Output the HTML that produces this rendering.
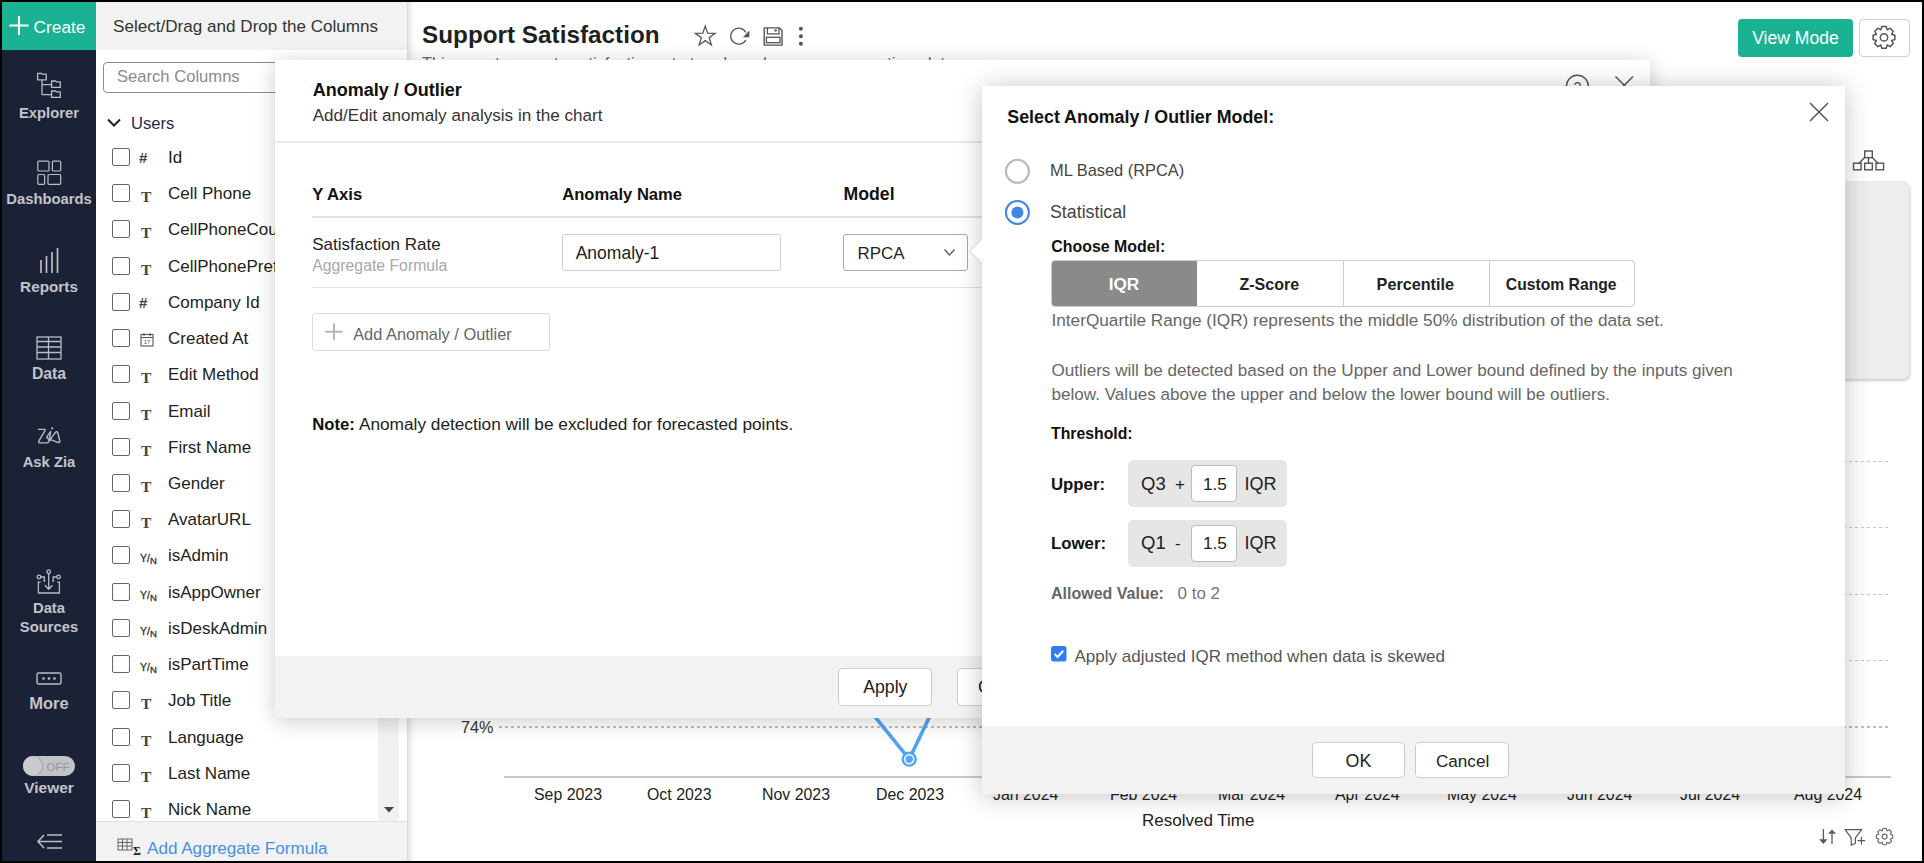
<!DOCTYPE html>
<html><head><meta charset="utf-8"><title>Support Satisfaction</title>
<style>
html,body{margin:0;padding:0;width:1924px;height:863px;overflow:hidden;background:#000}
#app{position:absolute;left:2px;top:2px;width:1920px;height:859px;background:#fff;overflow:hidden}
#c{position:absolute;left:-2px;top:-2px;width:1924px;height:863px}
.t{position:absolute;white-space:nowrap;line-height:1;font-family:"Liberation Sans",sans-serif}
.r{position:absolute;display:block}
</style></head><body><div id="app"><div id="c">
<div class="t" style="left:422px;top:23px;font-size:24.3px;font-weight:700;color:#1f1f1f;">Support Satisfaction</div>
<div class="t" style="left:422px;top:55px;font-size:16.3px;font-weight:400;color:#666;">This report presents satisfaction rate trends and responses over time data</div>
<svg class="r" style="left:690px;top:22px;" width="120" height="30" viewBox="0 0 120 30"><path d="M15.25 4.10 L17.66 11.18 L25.14 11.29 L19.15 15.77 L21.36 22.91 L15.25 18.60 L9.14 22.91 L11.35 15.77 L5.36 11.29 L12.84 11.18Z" fill="none" stroke="#555" stroke-width="1.3" stroke-linejoin="miter"/><path d="M55.76 17.96A8.0 8.0 0 1 1 55.83 10.57" fill="none" stroke="#555" stroke-width="1.3"/><path d="M59.4 8.6V15.2H52.9z" fill="#555"/><path d="M74.2 5.9H89.4L92 8.5V23.1H74.2z" fill="none" stroke="#555" stroke-width="1.4" stroke-linejoin="round"/><path d="M77.4 5.9V11.9H89V5.9" fill="none" stroke="#555" stroke-width="1.3"/><rect x="84.4" y="7.4" width="2.4" height="2.2" fill="#666"/><rect x="76.4" y="15.3" width="13.6" height="5.4" fill="none" stroke="#555" stroke-width="1.3"/><circle cx="110.9" cy="6.8" r="2" fill="#555"/><circle cx="110.9" cy="14.2" r="2" fill="#555"/><circle cx="110.9" cy="21.7" r="2" fill="#555"/></svg>
<div class="r" style="left:1738px;top:19px;width:115px;height:38px;background:#1bb193;border-radius:4px"></div>
<div class="t" style="left:1495.5px;width:600px;text-align:center;top:30px;font-size:17.6px;font-weight:400;color:#fff;">View Mode</div>
<div class="r" style="left:1859px;top:19px;width:51px;height:38px;background:#fff;border:1px solid #c9d0e6;border-radius:4px;box-sizing:border-box"></div>
<svg class="r" style="left:1870px;top:23px;" width="28" height="28" viewBox="0 0 28 28"><path d="M10.79 6.86 L11.81 3.52 L16.19 3.52 L17.21 6.86 L17.06 6.79 L20.15 5.16 L23.24 8.25 L21.61 11.34 L21.54 11.19 L24.88 12.21 L24.88 16.59 L21.54 17.61 L21.61 17.46 L23.24 20.55 L20.15 23.64 L17.06 22.01 L17.21 21.94 L16.19 25.28 L11.81 25.28 L10.79 21.94 L10.94 22.01 L7.85 23.64 L4.76 20.55 L6.39 17.46 L6.46 17.61 L3.12 16.59 L3.12 12.21 L6.46 11.19 L6.39 11.34 L4.76 8.25 L7.85 5.16 L10.94 6.79Z" fill="none" stroke="#555" stroke-width="1.5" stroke-linejoin="round"/><circle cx="14" cy="14.4" r="3.7" fill="none" stroke="#555" stroke-width="1.5"/></svg>
<svg class="r" style="left:1852px;top:150px;" width="34" height="22" viewBox="0 0 34 22"><g fill="none" stroke="#555" stroke-width="1.4"><rect x="12.7" y="1" width="7.6" height="6.6"/><rect x="1.5" y="13.2" width="7.6" height="6.6"/><rect x="12.7" y="13.2" width="7.6" height="6.6"/><rect x="24" y="13.2" width="7.6" height="6.6"/><path d="M16.5 7.6v5.6M12.7 7.6L7 13.2M20.3 7.6L26 13.2"/></g></svg>
<div class="r" style="left:1700px;top:181px;width:209px;height:198px;background:#ededed;border-radius:6px;box-shadow:1px 2px 3px rgba(0,0,0,.2)"></div>
<div class="r" style="left:499px;top:461px;width:1389px;height:1px;background-image:linear-gradient(90deg,#c4c4c4 50%,transparent 50%);background-size:6px 1px"></div>
<div class="r" style="left:499px;top:527px;width:1389px;height:1px;background-image:linear-gradient(90deg,#c4c4c4 50%,transparent 50%);background-size:6px 1px"></div>
<div class="r" style="left:499px;top:594px;width:1389px;height:1px;background-image:linear-gradient(90deg,#c4c4c4 50%,transparent 50%);background-size:6px 1px"></div>
<div class="r" style="left:499px;top:660px;width:1389px;height:1px;background-image:linear-gradient(90deg,#c4c4c4 50%,transparent 50%);background-size:6px 1px"></div>
<div class="r" style="left:499px;top:726px;width:1389px;height:2px;background-image:linear-gradient(90deg,#bdbdbd 50%,transparent 50%);background-size:6px 2px"></div>
<div class="r" style="left:504px;top:776px;width:1387px;height:2px;background:#c8c8c8"></div>
<div class="t" style="left:461px;top:719px;font-size:16.2px;font-weight:400;color:#333;">74%</div>
<div class="t" style="left:534px;top:787px;font-size:15.9px;font-weight:400;color:#222;">Sep 2023</div>
<div class="t" style="left:647px;top:787px;font-size:15.9px;font-weight:400;color:#222;">Oct 2023</div>
<div class="t" style="left:762px;top:787px;font-size:15.9px;font-weight:400;color:#222;">Nov 2023</div>
<div class="t" style="left:876px;top:787px;font-size:15.9px;font-weight:400;color:#222;">Dec 2023</div>
<div class="t" style="left:993px;top:787px;font-size:15.9px;font-weight:400;color:#222;">Jan 2024</div>
<div class="t" style="left:1110px;top:787px;font-size:15.9px;font-weight:400;color:#222;">Feb 2024</div>
<div class="t" style="left:1218px;top:787px;font-size:15.9px;font-weight:400;color:#222;">Mar 2024</div>
<div class="t" style="left:1335px;top:787px;font-size:15.9px;font-weight:400;color:#222;">Apr 2024</div>
<div class="t" style="left:1447px;top:787px;font-size:15.9px;font-weight:400;color:#222;">May 2024</div>
<div class="t" style="left:1567px;top:787px;font-size:15.9px;font-weight:400;color:#222;">Jun 2024</div>
<div class="t" style="left:1680px;top:787px;font-size:15.9px;font-weight:400;color:#222;">Jul 2024</div>
<div class="t" style="left:1794px;top:787px;font-size:15.9px;font-weight:400;color:#222;">Aug 2024</div>
<div class="t" style="left:1142px;top:812px;font-size:17px;font-weight:400;color:#222;">Resolved Time</div>
<svg class="r" style="left:850px;top:690px;" width="100" height="80" viewBox="0 0 100 80"><polyline points="3.4,0 59.2,69.2 92.3,0" fill="none" stroke="#52a2f0" stroke-width="3.6"/><circle cx="59.2" cy="69.2" r="7.6" fill="#52a2f0"/><circle cx="59.2" cy="69.2" r="5.2" fill="#fff"/><circle cx="59.2" cy="69.2" r="3.7" fill="#58a6f3"/></svg>
<svg class="r" style="left:1816px;top:826px;" width="80" height="24" viewBox="0 0 80 24"><g fill="none" stroke="#5a5a5a" stroke-width="1.3"><path d="M7.4 3.1V14M16 17.9V7.8"/><path d="M29.1 3.6H45.7L39.4 11.8V17.2L35.2 19.3V11.8Z" stroke-width="1.2" stroke-linejoin="round"/><path d="M45.4 10.7v7.9M41.5 14.6h7.7" stroke-width="1.2"/></g><path d="M3.1 13.2H11.5L7.4 17.9ZM12 7.8H20L16 3.6Z" fill="#5a5a5a"/><path d="M66.26 4.86 L67.01 2.45 L70.19 2.45 L70.94 4.86 L71.00 4.89 L73.24 3.72 L75.48 5.96 L74.31 8.20 L74.34 8.26 L76.75 9.01 L76.75 12.19 L74.34 12.94 L74.31 13.00 L75.48 15.24 L73.24 17.48 L71.00 16.31 L70.94 16.34 L70.19 18.75 L67.01 18.75 L66.26 16.34 L66.20 16.31 L63.96 17.48 L61.72 15.24 L62.89 13.00 L62.86 12.94 L60.45 12.19 L60.45 9.01 L62.86 8.26 L62.89 8.20 L61.72 5.96 L63.96 3.72 L66.20 4.89Z" fill="none" stroke="#666" stroke-width="1.1" stroke-linejoin="round"/><circle cx="68.6" cy="10.6" r="2.5" fill="none" stroke="#666" stroke-width="1.1"/></svg>
<div class="r" style="left:96px;top:2px;width:311px;height:48px;background:#f2f2f2"></div>
<div class="t" style="left:113px;top:18px;font-size:17.1px;font-weight:400;color:#333;">Select/Drag and Drop the Columns</div>
<div class="r" style="left:407px;top:2px;width:10px;height:859px;background:linear-gradient(90deg,#d9d9d9,#efefef 30%,#fafafa 60%,#fff)"></div>
<div class="r" style="left:103px;top:62px;width:297px;height:31px;border:1px solid #8c8c8c;border-radius:4px;box-sizing:border-box;background:#fff"></div>
<div class="t" style="left:117px;top:69px;font-size:16.6px;font-weight:400;color:#8a8a8a;">Search Columns</div>
<svg class="r" style="left:106px;top:117px;" width="16" height="12" viewBox="0 0 16 12"><path d="M2 2.5l6 6 6-6" fill="none" stroke="#222" stroke-width="2"/></svg>
<div class="t" style="left:131px;top:116px;font-size:16.6px;font-weight:400;color:#1f2a44;">Users</div>
<div class="r" style="left:112px;top:148px;width:18px;height:18px;border:1.2px solid #666;border-radius:2px;box-sizing:border-box;background:#fff"></div>
<div class="t" style="left:139px;top:150px;font-size:15px;font-weight:700;color:#444;">#</div>
<div class="t" style="left:168px;top:149px;font-size:17px;font-weight:400;color:#222;">Id</div>
<div class="r" style="left:112px;top:184px;width:18px;height:18px;border:1.2px solid #666;border-radius:2px;box-sizing:border-box;background:#fff"></div>
<div class="t" style="left:141px;top:189px;font-size:15.5px;font-weight:700;color:#444;font-family:'Liberation Serif',serif">T</div>
<div class="t" style="left:168px;top:185px;font-size:17px;font-weight:400;color:#222;">Cell Phone</div>
<div class="r" style="left:112px;top:220px;width:18px;height:18px;border:1.2px solid #666;border-radius:2px;box-sizing:border-box;background:#fff"></div>
<div class="t" style="left:141px;top:225px;font-size:15.5px;font-weight:700;color:#444;font-family:'Liberation Serif',serif">T</div>
<div class="t" style="left:168px;top:221px;font-size:17px;font-weight:400;color:#222;">CellPhoneCountryCode</div>
<div class="r" style="left:112px;top:257px;width:18px;height:18px;border:1.2px solid #666;border-radius:2px;box-sizing:border-box;background:#fff"></div>
<div class="t" style="left:141px;top:262px;font-size:15.5px;font-weight:700;color:#444;font-family:'Liberation Serif',serif">T</div>
<div class="t" style="left:168px;top:258px;font-size:17px;font-weight:400;color:#222;">CellPhonePrefix</div>
<div class="r" style="left:112px;top:293px;width:18px;height:18px;border:1.2px solid #666;border-radius:2px;box-sizing:border-box;background:#fff"></div>
<div class="t" style="left:139px;top:295px;font-size:15px;font-weight:700;color:#444;">#</div>
<div class="t" style="left:168px;top:294px;font-size:17px;font-weight:400;color:#222;">Company Id</div>
<div class="r" style="left:112px;top:329px;width:18px;height:18px;border:1.2px solid #666;border-radius:2px;box-sizing:border-box;background:#fff"></div>
<svg class="r" style="left:140px;top:332px;" width="14" height="15" viewBox="0 0 14 15"><rect x="1" y="2.5" width="12" height="11.5" fill="none" stroke="#555" stroke-width="1.1"/><path d="M1 5.5h12M4 1v3M10 1v3" stroke="#555" stroke-width="1.1"/><text x="7" y="12.3" font-size="6" text-anchor="middle" fill="#555" font-family="Liberation Sans">17</text></svg>
<div class="t" style="left:168px;top:330px;font-size:17px;font-weight:400;color:#222;">Created At</div>
<div class="r" style="left:112px;top:365px;width:18px;height:18px;border:1.2px solid #666;border-radius:2px;box-sizing:border-box;background:#fff"></div>
<div class="t" style="left:141px;top:370px;font-size:15.5px;font-weight:700;color:#444;font-family:'Liberation Serif',serif">T</div>
<div class="t" style="left:168px;top:366px;font-size:17px;font-weight:400;color:#222;">Edit Method</div>
<div class="r" style="left:112px;top:402px;width:18px;height:18px;border:1.2px solid #666;border-radius:2px;box-sizing:border-box;background:#fff"></div>
<div class="t" style="left:141px;top:407px;font-size:15.5px;font-weight:700;color:#444;font-family:'Liberation Serif',serif">T</div>
<div class="t" style="left:168px;top:403px;font-size:17px;font-weight:400;color:#222;">Email</div>
<div class="r" style="left:112px;top:438px;width:18px;height:18px;border:1.2px solid #666;border-radius:2px;box-sizing:border-box;background:#fff"></div>
<div class="t" style="left:141px;top:443px;font-size:15.5px;font-weight:700;color:#444;font-family:'Liberation Serif',serif">T</div>
<div class="t" style="left:168px;top:439px;font-size:17px;font-weight:400;color:#222;">First Name</div>
<div class="r" style="left:112px;top:474px;width:18px;height:18px;border:1.2px solid #666;border-radius:2px;box-sizing:border-box;background:#fff"></div>
<div class="t" style="left:141px;top:479px;font-size:15.5px;font-weight:700;color:#444;font-family:'Liberation Serif',serif">T</div>
<div class="t" style="left:168px;top:475px;font-size:17px;font-weight:400;color:#222;">Gender</div>
<div class="r" style="left:112px;top:510px;width:18px;height:18px;border:1.2px solid #666;border-radius:2px;box-sizing:border-box;background:#fff"></div>
<div class="t" style="left:141px;top:515px;font-size:15.5px;font-weight:700;color:#444;font-family:'Liberation Serif',serif">T</div>
<div class="t" style="left:168px;top:511px;font-size:17px;font-weight:400;color:#222;">AvatarURL</div>
<div class="r" style="left:112px;top:546px;width:18px;height:18px;border:1.2px solid #666;border-radius:2px;box-sizing:border-box;background:#fff"></div>
<div class="t" style="left:140px;top:553px;font-size:10.5px;font-weight:400;color:#333;-webkit-text-stroke:0.3px #333">Y/<span style="font-size:9.5px;position:relative;top:2px">N</span></div>
<div class="t" style="left:168px;top:547px;font-size:17px;font-weight:400;color:#222;">isAdmin</div>
<div class="r" style="left:112px;top:583px;width:18px;height:18px;border:1.2px solid #666;border-radius:2px;box-sizing:border-box;background:#fff"></div>
<div class="t" style="left:140px;top:590px;font-size:10.5px;font-weight:400;color:#333;-webkit-text-stroke:0.3px #333">Y/<span style="font-size:9.5px;position:relative;top:2px">N</span></div>
<div class="t" style="left:168px;top:584px;font-size:17px;font-weight:400;color:#222;">isAppOwner</div>
<div class="r" style="left:112px;top:619px;width:18px;height:18px;border:1.2px solid #666;border-radius:2px;box-sizing:border-box;background:#fff"></div>
<div class="t" style="left:140px;top:626px;font-size:10.5px;font-weight:400;color:#333;-webkit-text-stroke:0.3px #333">Y/<span style="font-size:9.5px;position:relative;top:2px">N</span></div>
<div class="t" style="left:168px;top:620px;font-size:17px;font-weight:400;color:#222;">isDeskAdmin</div>
<div class="r" style="left:112px;top:655px;width:18px;height:18px;border:1.2px solid #666;border-radius:2px;box-sizing:border-box;background:#fff"></div>
<div class="t" style="left:140px;top:662px;font-size:10.5px;font-weight:400;color:#333;-webkit-text-stroke:0.3px #333">Y/<span style="font-size:9.5px;position:relative;top:2px">N</span></div>
<div class="t" style="left:168px;top:656px;font-size:17px;font-weight:400;color:#222;">isPartTime</div>
<div class="r" style="left:112px;top:691px;width:18px;height:18px;border:1.2px solid #666;border-radius:2px;box-sizing:border-box;background:#fff"></div>
<div class="t" style="left:141px;top:696px;font-size:15.5px;font-weight:700;color:#444;font-family:'Liberation Serif',serif">T</div>
<div class="t" style="left:168px;top:692px;font-size:17px;font-weight:400;color:#222;">Job Title</div>
<div class="r" style="left:112px;top:728px;width:18px;height:18px;border:1.2px solid #666;border-radius:2px;box-sizing:border-box;background:#fff"></div>
<div class="t" style="left:141px;top:733px;font-size:15.5px;font-weight:700;color:#444;font-family:'Liberation Serif',serif">T</div>
<div class="t" style="left:168px;top:729px;font-size:17px;font-weight:400;color:#222;">Language</div>
<div class="r" style="left:112px;top:764px;width:18px;height:18px;border:1.2px solid #666;border-radius:2px;box-sizing:border-box;background:#fff"></div>
<div class="t" style="left:141px;top:769px;font-size:15.5px;font-weight:700;color:#444;font-family:'Liberation Serif',serif">T</div>
<div class="t" style="left:168px;top:765px;font-size:17px;font-weight:400;color:#222;">Last Name</div>
<div class="r" style="left:112px;top:800px;width:18px;height:18px;border:1.2px solid #666;border-radius:2px;box-sizing:border-box;background:#fff"></div>
<div class="t" style="left:141px;top:805px;font-size:15.5px;font-weight:700;color:#444;font-family:'Liberation Serif',serif">T</div>
<div class="t" style="left:168px;top:801px;font-size:17px;font-weight:400;color:#222;">Nick Name</div>
<div class="r" style="left:378px;top:93px;width:21px;height:728px;background:#f1f1f1"></div>
<svg class="r" style="left:384px;top:807px;" width="11" height="6" viewBox="0 0 11 6"><path d="M0 0h10L5 5.5z" fill="#444"/></svg>
<div class="r" style="left:96px;top:821px;width:311px;height:40px;background:#f2f2f2;border-top:1px solid #e3e3e3;box-sizing:border-box"></div>
<svg class="r" style="left:117px;top:838px;" width="24" height="18" viewBox="0 0 24 18"><g fill="none" stroke="#666" stroke-width="1"><rect x="1" y="1" width="14" height="11"/><path d="M1 4.5h14M1 8h14M5.5 1v11M10 1v11"/></g><text x="16" y="17" font-size="12" font-weight="bold" fill="#222" font-family="Liberation Serif">&#931;</text></svg>
<div class="t" style="left:147px;top:840px;font-size:17.1px;font-weight:400;color:#4a8ee6;">Add Aggregate Formula</div>
<div class="r" style="left:2px;top:2px;width:94px;height:859px;background:#1c2236"></div>
<div class="r" style="left:2px;top:2px;width:94px;height:48px;background:#1bb193"></div>
<svg class="r" style="left:9px;top:15px;" width="20" height="20" viewBox="0 0 20 20"><path d="M10 1v19M0.5 10.5h19" stroke="#fff" stroke-width="2"/></svg>
<div class="t" style="left:33.6px;top:19px;font-size:17.3px;font-weight:400;color:#fff;">Create</div>
<svg class="r" style="left:36px;top:71px;" width="26" height="28" viewBox="0 0 26 28"><g fill="none" stroke="#b9bcc4" stroke-width="1.3" stroke-linejoin="round"><path d="M1.6 8.9V2.4h3.8l.9.8h4V8.9z"/><path d="M15.6 16.4V10h3.8l.9.8h4v5.6z"/><path d="M15.6 26.4V20h3.8l.9.8h4v5.6z"/><path d="M6 8.9V23.6h9.6M6 13.6h9.6"/></g></svg>
<div class="t" style="left:-251px;width:600px;text-align:center;top:106px;font-size:14.8px;font-weight:700;color:#c2c4ca;">Explorer</div>
<svg class="r" style="left:36px;top:159px;" width="26" height="27" viewBox="0 0 26 27"><g fill="none" stroke="#b9bcc4" stroke-width="1.2"><rect x="1.8" y="2.1" width="11.2" height="9.9" rx="1"/><rect x="16.4" y="2.1" width="8.3" height="9.9" rx="1"/><rect x="1.8" y="15.5" width="6.8" height="9.8" rx="1"/><rect x="12" y="15.5" width="12.7" height="9.8" rx="1"/></g></svg>
<div class="t" style="left:-251px;width:600px;text-align:center;top:192px;font-size:14.8px;font-weight:700;color:#c2c4ca;">Dashboards</div>
<svg class="r" style="left:38px;top:247px;" width="22" height="28" viewBox="0 0 22 28"><g stroke="#b9bcc4" stroke-width="1.7"><path d="M3 26V13M8.5 26V9M14 26V5M19.5 26V1"/></g></svg>
<div class="t" style="left:-251px;width:600px;text-align:center;top:279px;font-size:15.3px;font-weight:700;color:#c2c4ca;">Reports</div>
<svg class="r" style="left:36px;top:336px;" width="26" height="24" viewBox="0 0 26 24"><g fill="none" stroke="#b9bcc4" stroke-width="1.3"><rect x="1" y="1" width="24" height="22"/><path d="M1 5.5h24M1 11h24M1 16.5h24M12.5 1v22"/></g></svg>
<div class="t" style="left:-251px;width:600px;text-align:center;top:366px;font-size:15.8px;font-weight:700;color:#c2c4ca;">Data</div>
<svg class="r" style="left:36px;top:426px;" width="28" height="19" viewBox="0 0 28 19"><g fill="none" stroke="#b9bcc4" stroke-width="1.4" stroke-linejoin="round" stroke-linecap="round"><path d="M2.4 3.4H8.3Q9.6 3.4 9 4.6L2.9 14.8Q2.1 16.9 4.2 16.9H10.4Q12 16.9 13 15.3L14.6 5.6"/><path d="M14.4 5.8L11 10.6Q10.4 12 12 12.6L21.8 16.3Q24.3 17 23.8 14.8L21.8 7Q21 4.6 19.2 6.6L13.3 14.6"/></g><circle cx="16.2" cy="2.3" r="1.1" fill="#b9bcc4"/></svg>
<div class="t" style="left:-251px;width:600px;text-align:center;top:455px;font-size:14.8px;font-weight:700;color:#c2c4ca;">Ask Zia</div>
<svg class="r" style="left:35px;top:568px;" width="28" height="27" viewBox="0 0 28 27"><g fill="none" stroke="#b9bcc4" stroke-width="1.3"><path d="M5.6 14.2H3.4V25H24.4V14.2H22.2"/><path d="M13.7 5.5V21.2M9.9 17.2l3.8 4 3.8-4"/><circle cx="13.7" cy="3.7" r="1.8"/><circle cx="4" cy="9" r="1.8"/><circle cx="23.5" cy="9" r="1.8"/><path d="M5.8 9H9.3V12.8M21.7 9H18.2V12.8"/></g><path d="M8 12.6L9.3 14.6 10.6 12.6zM16.9 12.6L18.2 14.6 19.5 12.6z" fill="#b9bcc4"/></svg>
<div class="t" style="left:-251px;width:600px;text-align:center;top:601px;font-size:14.8px;font-weight:700;color:#c2c4ca;">Data</div>
<div class="t" style="left:-251px;width:600px;text-align:center;top:620px;font-size:14.8px;font-weight:700;color:#c2c4ca;">Sources</div>
<svg class="r" style="left:36px;top:672px;" width="26" height="13" viewBox="0 0 26 13"><rect x="1" y="1" width="24" height="11" rx="1.5" fill="none" stroke="#b9bcc4" stroke-width="1.4"/><circle cx="7.5" cy="6.5" r="1.3" fill="#b9bcc4"/><circle cx="13" cy="6.5" r="1.3" fill="#b9bcc4"/><circle cx="18.5" cy="6.5" r="1.3" fill="#b9bcc4"/></svg>
<div class="t" style="left:-251px;width:600px;text-align:center;top:695px;font-size:16.5px;font-weight:700;color:#c2c4ca;">More</div>
<div class="r" style="left:23px;top:756px;width:52px;height:20px;background:#c2c3c7;border-radius:10px"></div>
<div class="r" style="left:23px;top:756px;width:19px;height:20px;background:#cacbcf;border-radius:50%;box-shadow:1px 0 1px rgba(0,0,0,.18)"></div>
<div class="t" style="left:-242px;width:600px;text-align:center;top:762px;font-size:11.5px;font-weight:400;color:#96979c;">OFF</div>
<div class="t" style="left:-251px;width:600px;text-align:center;top:780px;font-size:15.5px;font-weight:700;color:#c2c4ca;">Viewer</div>
<svg class="r" style="left:36px;top:832px;" width="28" height="19" viewBox="0 0 28 19"><g fill="none" stroke="#b9bcc4" stroke-width="1.6"><path d="M8 3L2 9.5 8 16M2 9.5h24M11 3h15M11 16h15"/></g></svg>
<div class="r" style="left:275px;top:60px;width:1375px;height:658px;background:#fff;box-shadow:0 3px 20px rgba(0,0,0,.2)">
</div>
<div class="t" style="left:312.7px;top:81px;font-size:18px;font-weight:700;color:#111;">Anomaly / Outlier</div>
<div class="t" style="left:312.7px;top:107px;font-size:17.1px;font-weight:400;color:#333;">Add/Edit anomaly analysis in the chart</div>
<div class="r" style="left:275px;top:141px;width:1375px;height:2px;background:#e8e8e8"></div>
<svg class="r" style="left:1562px;top:72px;" width="76" height="30" viewBox="0 0 76 30"><circle cx="15.4" cy="14.2" r="11" fill="none" stroke="#555" stroke-width="1.4"/><text x="15.4" y="19.5" font-size="14" text-anchor="middle" fill="#555" font-family="Liberation Sans">?</text><path d="M53.5 4.5l17.5 17.5M71 4.5L53.5 22" stroke="#555" stroke-width="1.5"/></svg>
<div class="t" style="left:312.2px;top:187px;font-size:16.7px;font-weight:700;color:#111;">Y Axis</div>
<div class="t" style="left:562.2px;top:187px;font-size:16.6px;font-weight:700;color:#111;">Anomaly Name</div>
<div class="t" style="left:843.5px;top:186px;font-size:17.7px;font-weight:700;color:#111;">Model</div>
<div class="r" style="left:312px;top:216px;width:1338px;height:2px;background:#e2e2e2"></div>
<div class="t" style="left:312.2px;top:236px;font-size:17px;font-weight:400;color:#222;">Satisfaction Rate</div>
<div class="t" style="left:312.2px;top:258px;font-size:15.8px;font-weight:400;color:#a8a8a8;">Aggregate Formula</div>
<div class="r" style="left:312px;top:287px;width:1338px;height:1px;background:#e2e2e2"></div>
<div class="r" style="left:562px;top:234px;width:219px;height:37px;border:1px solid #cfcfcf;border-radius:3px;box-sizing:border-box"></div>
<div class="t" style="left:575.7px;top:245px;font-size:17.5px;font-weight:400;color:#222;">Anomaly-1</div>
<div class="r" style="left:843px;top:234px;width:125px;height:37px;border:1px solid #a9a9a9;border-radius:3px;box-sizing:border-box"></div>
<div class="t" style="left:857.6px;top:246px;font-size:16.9px;font-weight:400;color:#222;">RPCA</div>
<svg class="r" style="left:943px;top:248px;" width="14" height="10" viewBox="0 0 14 10"><path d="M1.5 1.5l5 5.5 5-5.5" fill="none" stroke="#666" stroke-width="1.5"/></svg>
<div class="r" style="left:312px;top:313px;width:238px;height:38px;border:1px solid #dcdcdc;border-radius:3px;box-sizing:border-box"></div>
<svg class="r" style="left:325px;top:323px;" width="18" height="18" viewBox="0 0 18 18"><path d="M9 0.5v16.5M0.5 8.8h17" stroke="#b3b6c2" stroke-width="2"/></svg>
<div class="t" style="left:353.2px;top:326px;font-size:16.4px;font-weight:400;color:#666;">Add Anomaly / Outlier</div>
<div class="t" style="left:312.2px;top:417px;font-size:16.7px;font-weight:700;color:#111;">Note:</div>
<div class="t" style="left:358.9px;top:416px;font-size:17.25px;font-weight:400;color:#222;">Anomaly detection will be excluded for forecasted points.</div>
<div class="r" style="left:275px;top:656px;width:1375px;height:62px;background:#f2f2f2"></div>
<div class="r" style="left:838px;top:668px;width:94px;height:38px;background:#fff;border:1px solid #cccccc;border-radius:4px;box-sizing:border-box"></div>
<div class="t" style="left:863.2px;top:679px;font-size:17.7px;font-weight:400;color:#222;">Apply</div>
<div class="r" style="left:957px;top:668px;width:94px;height:38px;background:#fff;border:1px solid #cccccc;border-radius:4px;box-sizing:border-box"></div>
<div class="t" style="left:978px;top:679px;font-size:17.7px;font-weight:400;color:#222;">Cancel</div>
<div class="r" style="left:982px;top:86px;width:863px;height:708px;background:#fff;box-shadow:0 2px 24px rgba(0,0,0,.24)"></div>
<svg class="r" style="left:962px;top:230px;" width="22" height="42" viewBox="0 0 22 42"><path d="M21 8L7.3 21 21 34z" fill="#fff"/><path d="M20.5 8.5L7.5 21l13 12.5" fill="none" stroke="#cfcfcf" stroke-width="1"/></svg>
<div class="t" style="left:1007.3px;top:109px;font-size:17.84px;font-weight:700;color:#111;">Select Anomaly / Outlier Model:</div>
<svg class="r" style="left:1808px;top:101px;" width="22" height="22" viewBox="0 0 22 22"><path d="M2 2l18 18M20 2L2 20" stroke="#555" stroke-width="1.5"/></svg>
<svg class="r" style="left:1004px;top:158px;" width="27" height="27" viewBox="0 0 27 27"><circle cx="13.4" cy="13.3" r="11.5" fill="#fff" stroke="#b8b8b8" stroke-width="2"/></svg>
<div class="t" style="left:1050px;top:162px;font-size:16.4px;font-weight:400;color:#444;">ML Based (RPCA)</div>
<svg class="r" style="left:1004px;top:199px;" width="27" height="27" viewBox="0 0 27 27"><circle cx="13.4" cy="13.4" r="11.5" fill="#fff" stroke="#3f86e8" stroke-width="2"/><circle cx="13.4" cy="13.4" r="6" fill="#3f86e8"/></svg>
<div class="t" style="left:1050px;top:204px;font-size:17.8px;font-weight:400;color:#444;">Statistical</div>
<div class="t" style="left:1051.3px;top:239px;font-size:15.9px;font-weight:700;color:#111;">Choose Model:</div>
<div class="r" style="left:1051px;top:260px;width:584px;height:47px;border:1px solid #cdcdcd;border-radius:4px;box-sizing:border-box;overflow:hidden"><div style="position:absolute;left:0;top:0;width:145px;height:45px;background:#8a8a8a"></div><div style="position:absolute;left:291px;top:0;width:1px;height:45px;background:#cdcdcd"></div><div style="position:absolute;left:437px;top:0;width:1px;height:45px;background:#cdcdcd"></div></div>
<div class="t" style="left:824px;width:600px;text-align:center;top:276px;font-size:17.2px;font-weight:700;color:#fff;">IQR</div>
<div class="t" style="left:969.3px;width:600px;text-align:center;top:277px;font-size:16px;font-weight:700;color:#222;">Z-Score</div>
<div class="t" style="left:1115.3px;width:600px;text-align:center;top:276px;font-size:16.2px;font-weight:700;color:#222;">Percentile</div>
<div class="t" style="left:1261.2px;width:600px;text-align:center;top:277px;font-size:15.7px;font-weight:700;color:#222;">Custom Range</div>
<div class="t" style="left:1051.5px;top:312px;font-size:17.2px;font-weight:400;color:#666;">InterQuartile Range (IQR) represents the middle 50% distribution of the data set.</div>
<div class="t" style="left:1051.5px;top:362px;font-size:17.1px;font-weight:400;color:#666;">Outliers will be detected based on the Upper and Lower bound defined by the inputs given</div>
<div class="t" style="left:1051.5px;top:386px;font-size:17.1px;font-weight:400;color:#666;">below. Values above the upper and below the lower bound will be outliers.</div>
<div class="t" style="left:1051px;top:426px;font-size:15.8px;font-weight:700;color:#111;">Threshold:</div>
<div class="t" style="left:1051px;top:477px;font-size:16.8px;font-weight:700;color:#111;">Upper:</div>
<div class="r" style="left:1128px;top:460px;width:159px;height:47px;background:#e6e6e6;border-radius:5px"></div>
<div class="t" style="left:1141px;top:475px;font-size:18.5px;font-weight:400;color:#222;">Q3</div>
<div class="t" style="left:1175px;top:476px;font-size:17px;font-weight:400;color:#222;">+</div>
<div class="r" style="left:1191px;top:465px;width:46px;height:37px;background:#fff;border:1px solid #bdbdbd;border-radius:4px;box-sizing:border-box"></div>
<div class="t" style="left:1203px;top:476px;font-size:17.2px;font-weight:400;color:#222;">1.5</div>
<div class="t" style="left:1244.5px;top:475px;font-size:18px;font-weight:400;color:#222;">IQR</div>
<div class="t" style="left:1051px;top:536px;font-size:16.8px;font-weight:700;color:#111;">Lower:</div>
<div class="r" style="left:1128px;top:520px;width:159px;height:47px;background:#e6e6e6;border-radius:5px"></div>
<div class="t" style="left:1141px;top:534px;font-size:18.5px;font-weight:400;color:#222;">Q1</div>
<div class="t" style="left:1175px;top:535px;font-size:17px;font-weight:400;color:#222;">-</div>
<div class="r" style="left:1191px;top:525px;width:46px;height:37px;background:#fff;border:1px solid #bdbdbd;border-radius:4px;box-sizing:border-box"></div>
<div class="t" style="left:1203px;top:535px;font-size:17.2px;font-weight:400;color:#222;">1.5</div>
<div class="t" style="left:1244.5px;top:534px;font-size:18px;font-weight:400;color:#222;">IQR</div>
<div class="t" style="left:1051px;top:586px;font-size:16px;font-weight:700;color:#666;">Allowed Value:</div>
<div class="t" style="left:1177.5px;top:585px;font-size:17px;font-weight:400;color:#777;">0 to 2</div>
<svg class="r" style="left:1051px;top:646px;" width="16" height="16" viewBox="0 0 16 16"><rect x="0" y="0" width="15.5" height="15.5" rx="2.5" fill="#2f7cf6"/><path d="M3.6 8l3 3 5.6-6.2" fill="none" stroke="#fff" stroke-width="2.1"/></svg>
<div class="t" style="left:1074.5px;top:648px;font-size:17px;font-weight:400;color:#555;">Apply adjusted IQR method when data is skewed</div>
<div class="r" style="left:982px;top:726px;width:863px;height:68px;background:#f2f2f2"></div>
<div class="r" style="left:1312px;top:742px;width:93px;height:36px;background:#fff;border:1px solid #cccccc;border-radius:4px;box-sizing:border-box"></div>
<div class="t" style="left:1345.6px;top:753px;font-size:17.9px;font-weight:400;color:#222;">OK</div>
<div class="r" style="left:1415px;top:742px;width:94px;height:36px;background:#fff;border:1px solid #cccccc;border-radius:4px;box-sizing:border-box"></div>
<div class="t" style="left:1436px;top:753px;font-size:17.1px;font-weight:400;color:#222;">Cancel</div>
</div></div></body></html>
